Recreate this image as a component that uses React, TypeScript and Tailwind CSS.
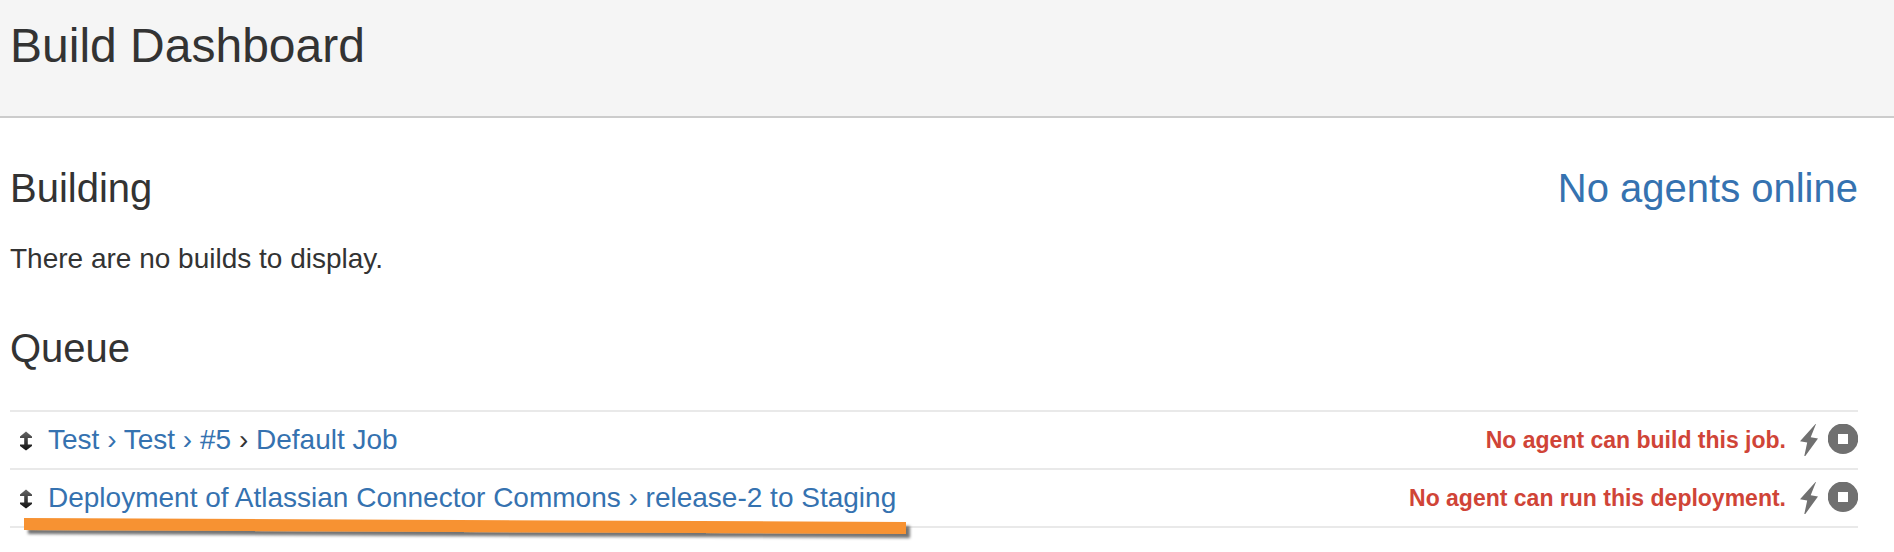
import type { ReactNode } from 'react';

interface QueueItem {
  id: string;
  title: ReactNode;
  status: string;
  highlighted?: boolean;
}

const LINK = 'text-[#3572b0] hover:underline';

const QUEUE: QueueItem[] = [
  {
    id: 'test-5',
    title: (
      <>
        <a href="#test-5" className={LINK}>
          Test › Test › #5
        </a>{' '}
        ›{' '}
        <a href="#default-job" className={LINK}>
          Default Job
        </a>
      </>
    ),
    status: 'No agent can build this job.',
  },
  {
    id: 'release-2',
    title: (
      <a href="#release-2" className={LINK}>
        Deployment of Atlassian Connector Commons › release-2 to Staging
      </a>
    ),
    status: 'No agent can run this deployment.',
    highlighted: true,
  },
];

function DragIcon() {
  return (
    <svg width="14" height="20" viewBox="0 0 14 20" aria-hidden="true">
      <defs>
        <linearGradient id="drag-shade" x1="0" y1="0" x2="0" y2="1">
          <stop offset="0" stopColor="#666" />
          <stop offset="1" stopColor="#111" />
        </linearGradient>
      </defs>
      <path
        d="M7 0.5L13 5.5V7H8.8V13.5H13V15L7 19.5L1 15V13.5H5.2V7H1V5.5Z"
        fill="url(#drag-shade)"
      />
    </svg>
  );
}

function BoltIcon() {
  return (
    <svg width="18" height="32" viewBox="0 0 18 32" aria-hidden="true">
      <path d="M15.5 0L0 17.3L7.2 18.4L4.3 32H5.3L18 14.5L10.7 13.2L16 0Z" fill="#707070" />
    </svg>
  );
}

function StopIcon() {
  return (
    <svg width="30" height="30" viewBox="0 0 30 30" aria-hidden="true">
      <path
        d="M15 -0.5A15.25 15.25 0 1 1 15 30A15.25 15.25 0 1 1 15 -0.5ZM10 10V20H20V10Z"
        fill="#707070"
        fillRule="evenodd"
      />
    </svg>
  );
}

function MarkerStroke() {
  return (
    <svg
      className="pointer-events-none absolute top-full -left-6 h-7 w-[894px] max-w-none"
      viewBox="0 0 894 28"
      aria-hidden="true"
    >
      <defs>
        <filter id="marker-shadow" x="-2%" y="-50%" width="104%" height="220%">
          <feDropShadow dx="4" dy="4" stdDeviation="1.5" floodColor="#000" floodOpacity="0.55" />
        </filter>
      </defs>
      <path d="M0 0L882 4V16L0 12Z" fill="#f79232" filter="url(#marker-shadow)" />
    </svg>
  );
}

function QueueRow({ item }: { item: QueueItem }) {
  return (
    <tr className="border-y-2 border-[#e9e9e9]">
      <td className="w-[38px] py-2 pl-[9px]">
        <button type="button" aria-label="Reorder" className="flex cursor-move pt-0.5">
          <DragIcon />
        </button>
      </td>
      <td className="py-2 text-[28px] leading-[40px]">
        <span className="relative inline-block align-top">
          {item.title}
          {item.highlighted && <MarkerStroke />}
        </span>
      </td>
      <td className="py-2">
        <div className="flex h-[40px] items-center justify-end">
          <span className="text-[23px] leading-[40px] font-bold text-[#d04437]">{item.status}</span>
          <button type="button" aria-label="Prioritise" className="ml-3.5">
            <BoltIcon />
          </button>
          <button type="button" aria-label="Stop" className="ml-2.5 pb-0.5">
            <StopIcon />
          </button>
        </div>
      </td>
    </tr>
  );
}

export default function App() {
  return (
    <div className="min-h-screen bg-white font-['Liberation_Sans',Arial,sans-serif] text-[#333]">
      <header className="border-b-2 border-[#ccc] bg-[#f5f5f5] pt-[18px] pr-9 pb-[42px] pl-2.5">
        <h1 className="text-5xl leading-[56px]">Build Dashboard</h1>
      </header>
      <main className="pt-[46px] pr-9 pl-2.5">
        <section>
          <div className="flex items-baseline justify-between text-[40px] leading-[48px]">
            <h2>Building</h2>
            <a href="#agents" className={LINK}>
              No agents online
            </a>
          </div>
          <p className="mt-[27px] text-[28px] leading-[40px]">There are no builds to display.</p>
        </section>
        <section className="mt-[45px]">
          <h2 className="text-[40px] leading-[48px]">Queue</h2>
          <table className="mt-[38px] w-full border-collapse">
            <tbody>
              {QUEUE.map((item) => (
                <QueueRow key={item.id} item={item} />
              ))}
            </tbody>
          </table>
        </section>
      </main>
    </div>
  );
}
